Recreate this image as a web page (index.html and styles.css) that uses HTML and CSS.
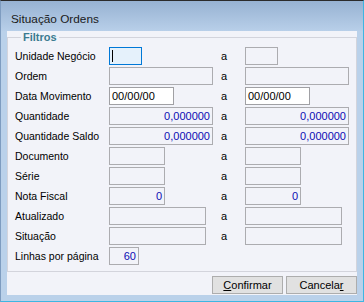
FILE: index.html
```html
<!DOCTYPE html>
<html lang="pt">
<head>
  <meta charset="UTF-8">
  <title>Situação Ordens</title>
  <link rel="stylesheet" href="styles.css">
</head>
<body>
  <div class="window">
    <div class="titlebar">Situação Ordens</div>
    <div class="client">
      <fieldset class="group">
        <legend>Filtros</legend>
        <div class="form">
          <span class="lbl">Unidade Negócio</span>
          <div class="field f-xs focus"><span class="caret"></span></div>
          <span class="sep">a</span>
          <div class="field f-xs"></div>

          <span class="lbl">Ordem</span>
          <div class="field f-lg"></div>
          <span class="sep">a</span>
          <div class="field f-lg"></div>

          <span class="lbl">Data Movimento</span>
          <div class="field f-md white">00/00/00</div>
          <span class="sep">a</span>
          <div class="field f-md white">00/00/00</div>

          <span class="lbl">Quantidade</span>
          <div class="field f-lg num">0,000000</div>
          <span class="sep">a</span>
          <div class="field f-lg num">0,000000</div>

          <span class="lbl">Quantidade Saldo</span>
          <div class="field f-lg num">0,000000</div>
          <span class="sep">a</span>
          <div class="field f-lg num">0,000000</div>

          <span class="lbl">Documento</span>
          <div class="field f-sm"></div>
          <span class="sep">a</span>
          <div class="field f-sm"></div>

          <span class="lbl">Série</span>
          <div class="field f-sm"></div>
          <span class="sep">a</span>
          <div class="field f-sm"></div>

          <span class="lbl">Nota Fiscal</span>
          <div class="field f-sm num">0</div>
          <span class="sep">a</span>
          <div class="field f-sm num">0</div>

          <span class="lbl">Atualizado</span>
          <div class="field f-ml"></div>
          <span class="sep">a</span>
          <div class="field f-ml"></div>

          <span class="lbl">Situação</span>
          <div class="field f-ml"></div>
          <span class="sep">a</span>
          <div class="field f-ml"></div>

          <span class="lbl">Linhas por página</span>
          <div class="field f-xxs num">60</div>
        </div>
      </fieldset>
      <div class="buttons">
        <button type="button"><u>C</u>onfirmar</button>
        <button type="button">Cancela<u>r</u></button>
      </div>
    </div>
  </div>
</body>
</html>
```

FILE: styles.css
```css
:root {
  --frame: #bad1ea;
  --panel: #f2f3f9;
  --field-border: #acacb0;
  --value: #0c0cb4;
  --font: 'Liberation Sans', Arial, sans-serif;
}
* {
  box-sizing: border-box;
  margin: 0;
  padding: 0;
}
body {
  font-family: var(--font);
  background: #fff;
}
.window {
  width: 364px;
  height: 302px;
  display: flex;
  flex-direction: column;
  background: var(--frame);
  border-top: 1px solid #2b2b2b;
  border-left: 1px solid #7e9cc0;
  border-right: 1px solid #3db6e2;
  border-bottom: 1px solid #3db6e2;
}
.titlebar {
  height: 30px;
  padding: 11px 0 0 10px;
  font-size: 11.8px;
  line-height: 14px;
  color: #1a1a1a;
  background: linear-gradient(#97b2d2, #b8cfe9);
}
.client {
  height: 264px;
  margin: 0 6px;
  background: var(--panel);
  display: flex;
  flex-direction: column;
}
.group {
  border: 1px solid #d3d4dc;
  padding: 3px 0 6px 7px;
  min-width: 0;
}
.group legend {
  margin-left: 6px;
  padding: 0 2px;
  font-size: 11px;
  font-weight: bold;
  line-height: 13px;
  color: #3b7b90;
}
.form {
  display: grid;
  grid-template-columns: 94px 112px 24px 1fr;
  grid-auto-rows: 18px;
  row-gap: 2px;
  align-items: center;
}
.lbl {
  grid-column: 1;
  font-size: 10.5px;
  line-height: 18px;
  color: #000;
  white-space: nowrap;
}
.sep {
  font-size: 11px;
  line-height: 18px;
  color: #000;
}
.field {
  height: 18px;
  border: 1px solid var(--field-border);
  background: var(--panel);
  padding: 0 2px;
  font-size: 11px;
  line-height: 16px;
  color: #000;
  white-space: nowrap;
}
.field.white {
  background: #fff;
  border-color: #a0a0a4;
}
.field.num {
  text-align: right;
  color: var(--value);
}
.field.focus {
  border-color: #0078d7;
  background: #e5f1fb;
  padding-top: 2px;
}
.caret {
  display: block;
  width: 1px;
  height: 12px;
  background: #000;
}
.f-xs { width: 33px; }
.f-xxs { width: 30px; }
.f-sm { width: 56px; }
.f-md { width: 65px; }
.f-ml { width: 97px; }
.f-lg { width: 104px; }
.buttons {
  display: flex;
  justify-content: flex-end;
  gap: 3px;
  margin-top: 4px;
}
.buttons button {
  width: 71px;
  height: 18px;
  border: 1px solid #adadad;
  background: #e1e1e1;
  font-family: var(--font);
  font-size: 11px;
  line-height: 16px;
  color: #000;
}
.buttons u {
  text-decoration: underline;
}
```
